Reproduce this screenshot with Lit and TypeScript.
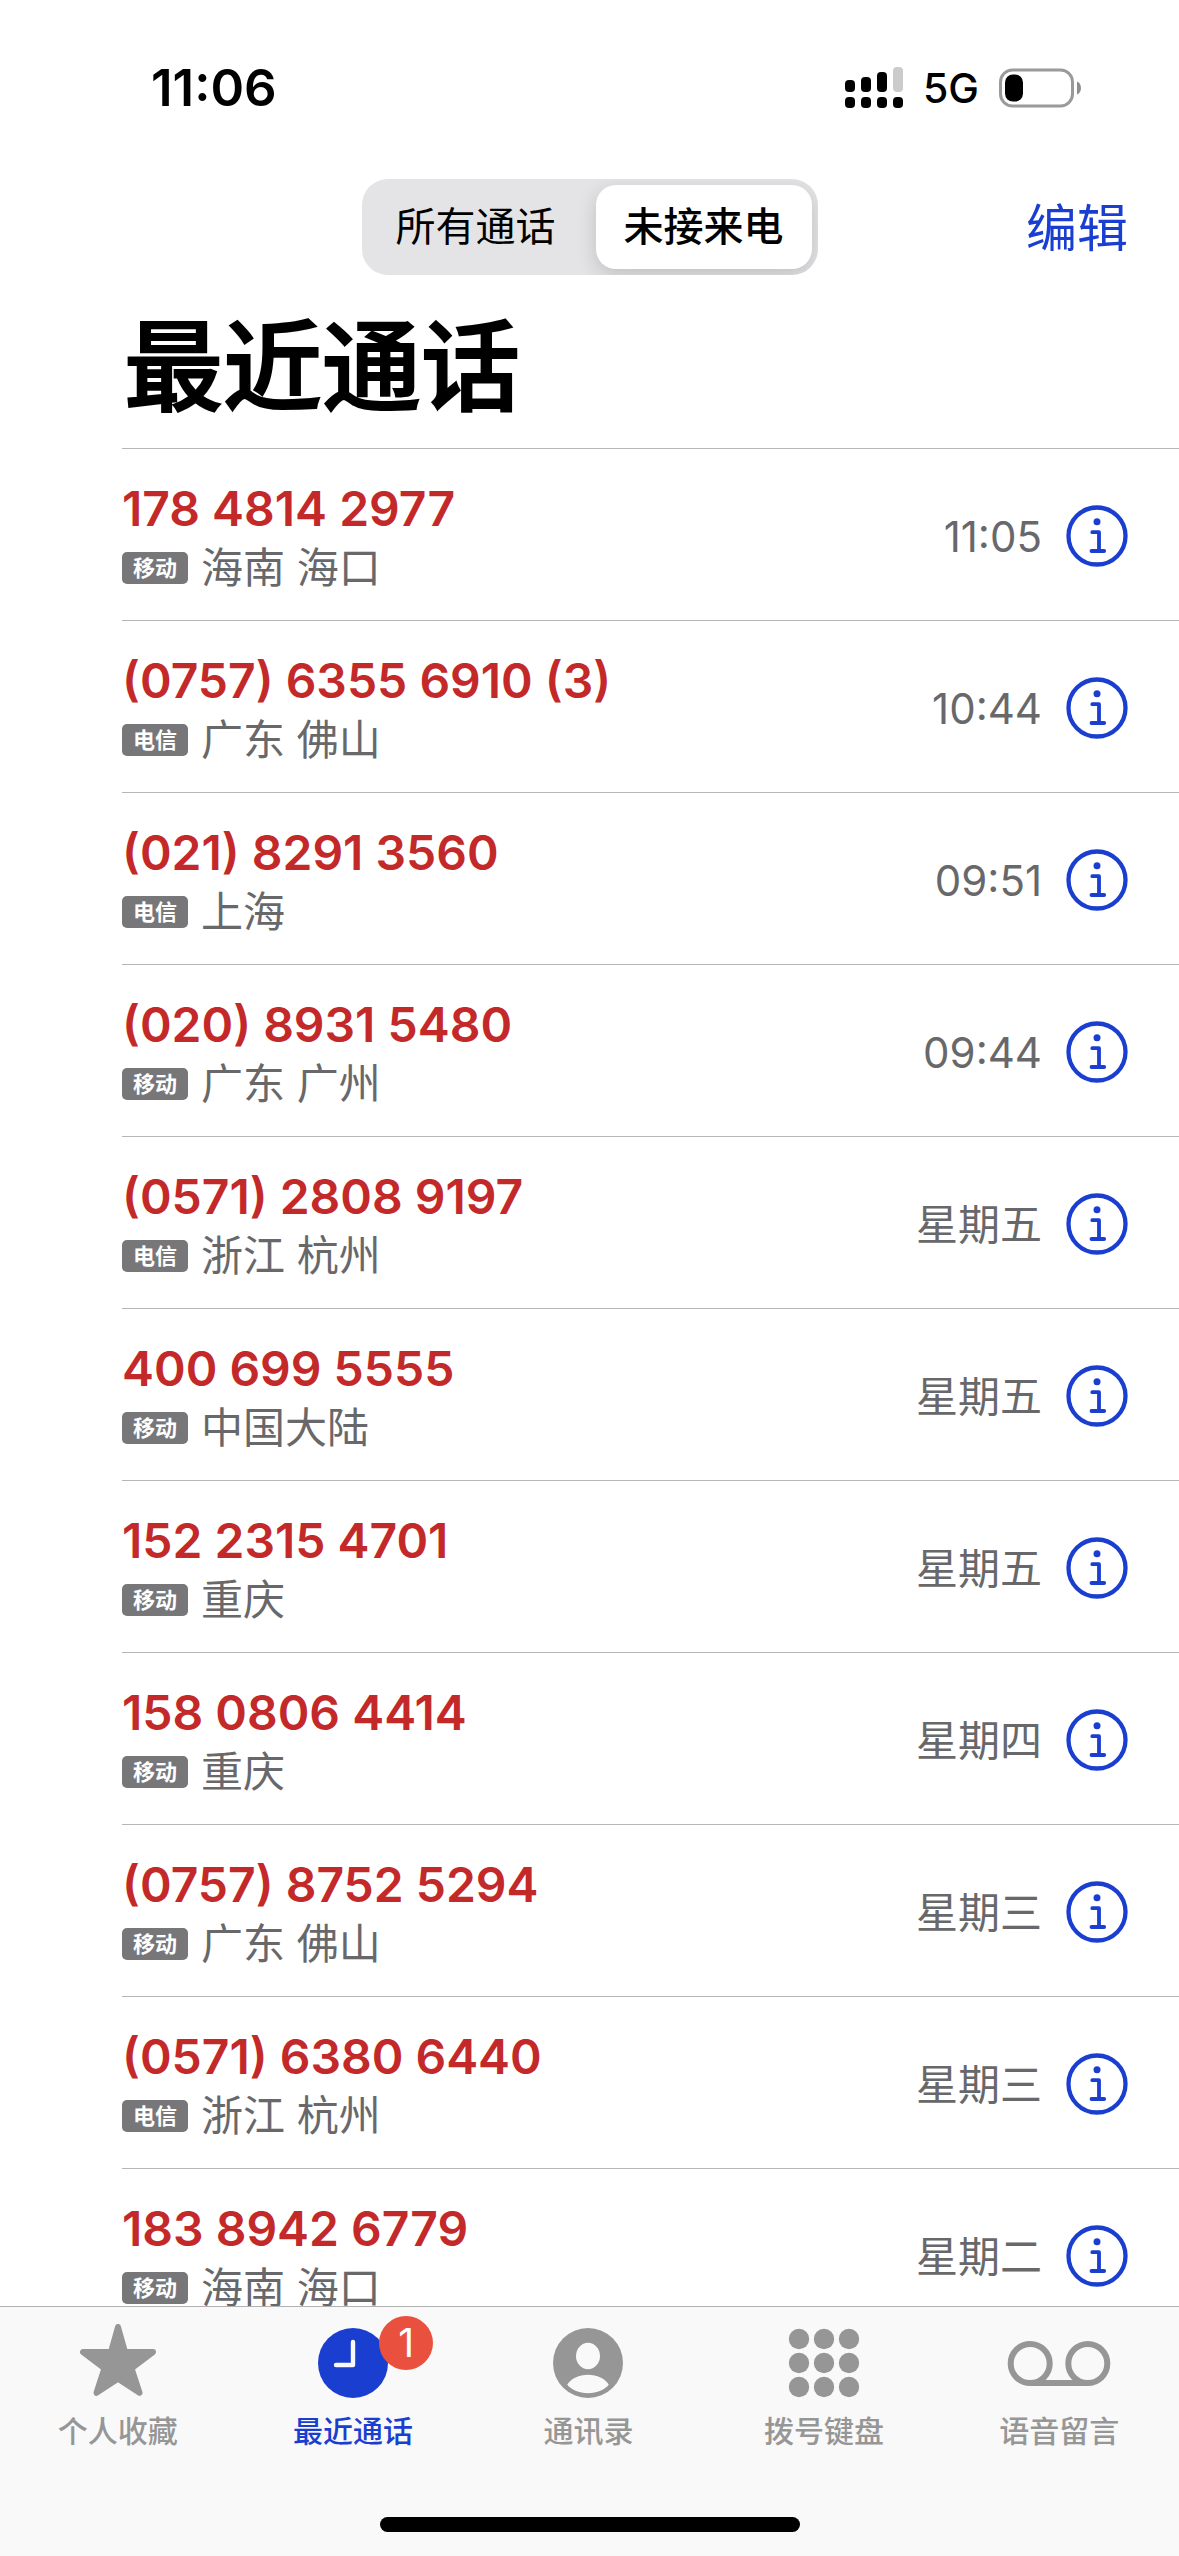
import { LitElement, html, svg, css } from "lit";
import { customElement, state } from "lit/decorators.js";
import { classMap } from "lit/directives/class-map.js";

interface Call {
  number: string;
  carrier: string;
  region: string;
  when: string;
}

const calls: Call[] = [
  { number: "178 4814 2977", carrier: "移动", region: "海南 海口", when: "11:05" },
  { number: "(0757) 6355 6910 (3)", carrier: "电信", region: "广东 佛山", when: "10:44" },
  { number: "(021) 8291 3560", carrier: "电信", region: "上海", when: "09:51" },
  { number: "(020) 8931 5480", carrier: "移动", region: "广东 广州", when: "09:44" },
  { number: "(0571) 2808 9197", carrier: "电信", region: "浙江 杭州", when: "星期五" },
  { number: "400 699 5555", carrier: "移动", region: "中国大陆", when: "星期五" },
  { number: "152 2315 4701", carrier: "移动", region: "重庆", when: "星期五" },
  { number: "158 0806 4414", carrier: "移动", region: "重庆", when: "星期四" },
  { number: "(0757) 8752 5294", carrier: "移动", region: "广东 佛山", when: "星期三" },
  { number: "(0571) 6380 6440", carrier: "电信", region: "浙江 杭州", when: "星期三" },
  { number: "183 8942 6779", carrier: "移动", region: "海南 海口", when: "星期二" },
];

const starIcon = svg`<path d="M52 7 59 32 87 32 65.5 48.3 73.5 72.8 52 58.7 30.5 72.8 38.5 48.3 17 32 45 32Z"
  fill="currentColor" stroke="currentColor" stroke-width="6" stroke-linejoin="round"/>`;
const clockIcon = svg`<circle cx="52" cy="43" r="35" fill="currentColor"/>
  <path d="M52 22V45H35" fill="none" stroke="#f9f9f9" stroke-width="4.4" stroke-linecap="round" stroke-linejoin="round"/>`;
const personIcon = svg`<circle cx="52" cy="43" r="35" fill="currentColor"/>
  <ellipse cx="52" cy="36" rx="12" ry="13.2" fill="#f9f9f9"/>
  <path d="M31.2 64.5C35 58.500 43 54.700 52 54.700S69 58.500 72.800 64.500C69 69.800 61 73.200 52 73.200S35 69.800 31.200 64.500Z" fill="#f9f9f9"/>`;
const keypadIcon = svg`${[19, 43, 67].map((y) =>
  [27, 52, 77].map((x) => svg`<circle cx=${x} cy=${y} r="10.2" fill="currentColor"/>`)
)}`;
const voicemailIcon = svg`<g fill="none" stroke="currentColor" stroke-width="6">
  <circle cx="23.200" cy="43.500" r="19.500"/><circle cx="80.800" cy="43.500" r="19.500"/><path d="M23 63H81"/></g>`;

const tabs = [
  { id: "favorites", label: "个人收藏", icon: starIcon, badge: "" },
  { id: "recents", label: "最近通话", icon: clockIcon, badge: "1" },
  { id: "contacts", label: "通讯录", icon: personIcon, badge: "" },
  { id: "keypad", label: "拨号键盘", icon: keypadIcon, badge: "" },
  { id: "voicemail", label: "语音留言", icon: voicemailIcon, badge: "" },
];

@customElement("call-row")
class CallRow extends LitElement {
  static properties = { call: { attribute: false } };
  declare call: Call;

  static styles = css`
    :host {
      display: flex;
      align-items: center;
      gap: 24px;
      padding: 32px 51px 27px 0;
      border-bottom: 1px solid #b6b6b8;
    }
    .who {
      flex: 1;
      min-width: 0;
    }
    .number {
      font-size: 48px;
      line-height: 56px;
      font-weight: 600;
      color: #c4292a;
      white-space: nowrap;
    }
    .place {
      display: flex;
      align-items: center;
      gap: 13px;
      margin-top: 6px;
      font-size: 42px;
      line-height: 50px;
      color: #68686b;
    }
    .carrier {
      padding: 0 11px;
      border-radius: 5px;
      background: #77777a;
      color: #fff;
      font-size: 22px;
      line-height: 32px;
      font-weight: 700;
    }
    .when {
      font-size: 42px;
      line-height: 50px;
      color: #68686b;
    }
    .info {
      display: flex;
      padding: 0 0 3px;
      border: 0;
      background: none;
      color: #1a3ed0;
      cursor: pointer;
    }
  `;

  render() {
    const { number, carrier, region, when } = this.call;
    return html`
      <div class="who">
        <div class="number">${number}</div>
        <div class="place"><span class="carrier">${carrier}</span><span>${region}</span></div>
      </div>
      <time class="when">${when}</time>
      <button class="info" aria-label="详细信息">
        <svg width="62" height="62" viewBox="-31 -31 62 62" fill="none" stroke="currentColor">
          <circle r="28.500" stroke-width="4.300" />
          <circle cy="-14.300" r="3.500" fill="currentColor" stroke="none" />
          <path d="M-4.700 -3.800H2V15M-5.500 15H7.200" stroke-width="3.800" stroke-linecap="round" stroke-linejoin="round" />
        </svg>
      </button>
    `;
  }
}

@customElement("app-root")
class AppRoot extends LitElement {
  @state() private filter = "missed";
  @state() private tab = "recents";

  static styles = css`
    :host {
      display: flex;
      flex-direction: column;
      height: 100vh;
      overflow: hidden;
      background: #fff;
      color: #000;
      font-family: Inter, "Noto Sans CJK SC", sans-serif;
    }
    button {
      font-family: inherit;
      border: 0;
      padding: 0;
      background: none;
      cursor: pointer;
    }
    .status {
      display: flex;
      align-items: center;
      justify-content: space-between;
      box-sizing: border-box;
      height: 179px;
      padding: 0 97px 3px 151px;
    }
    .clock {
      font-size: 51px;
      line-height: 60px;
      font-weight: 600;
    }
    .signals {
      display: flex;
      align-items: center;
      gap: 20px;
    }
    .network {
      font-size: 41px;
      line-height: 50px;
      font-weight: 500;
    }
    .nav {
      display: grid;
      grid-template-columns: 1fr auto 1fr;
      align-items: center;
      padding: 0 51px;
    }
    .segments {
      grid-column: 2;
      display: grid;
      grid-template-columns: 1fr 1fr;
      gap: 12px;
      padding: 6px;
      border-radius: 26px;
      background: #e4e4e6;
      overflow: hidden;
    }
    .segment {
      padding: 0 28px;
      border-radius: 20px;
      font-size: 40px;
      line-height: 84px;
      color: #000;
    }
    .segment.on {
      background: #fff;
      font-weight: 500;
      box-shadow: 0 6px 20px rgba(0, 0, 0, 0.16);
    }
    .edit {
      justify-self: end;
      padding-top: 3px;
      font-size: 51px;
      line-height: 60px;
      color: #1a3ed0;
    }
    .title {
      margin: 0;
      padding: 32px 0 21px 124px;
      font-size: 99px;
      line-height: 120px;
      font-weight: 500;
      -webkit-text-stroke: 2px #000;
    }
    .list {
      flex: 1;
      min-height: 0;
      margin: 0 0 0 122px;
      padding: 0;
      border-top: 1px solid #b6b6b8;
      list-style: none;
      overflow: hidden;
    }
    .tabbar {
      border-top: 1px solid #b2b2b2;
      background: #f9f9f9;
    }
    .tabs {
      display: grid;
      grid-template-columns: repeat(5, 1fr);
      padding: 13px 2px 0 0;
    }
    .tab {
      display: flex;
      flex-direction: column;
      align-items: center;
      gap: 7px;
      color: #969696;
      font-size: 30px;
      line-height: 40px;
      font-weight: 500;
      text-decoration: none;
    }
    .tab.on {
      color: #1a3ed0;
    }
    .glyph {
      display: flex;
      position: relative;
    }
    .badge {
      position: absolute;
      left: 78px;
      top: -4px;
      min-width: 54px;
      border-radius: 27px;
      background: #e9503e;
      color: #fff;
      font-size: 39px;
      line-height: 54px;
      font-weight: 400;
      text-align: center;
    }
    .home {
      width: 420px;
      height: 15px;
      margin: 66px auto 24px;
      border-radius: 8px;
      background: #000;
    }
  `;

  private segment(id: string, label: string) {
    const on = this.filter === id;
    return html`<button
      class=${classMap({ segment: true, on })}
      aria-pressed=${on ? "true" : "false"}
      @click=${() => (this.filter = id)}
    >${label}</button>`;
  }

  render() {
    return html`
      <header>
        <div class="status">
          <span class="clock">11:06</span>
          <div class="signals">
            <svg width="58" height="42" viewBox="0 0 58 42" aria-hidden="true">
              <rect y="13" width="10" height="12" rx="4" />
              <rect x="16" y="10" width="10" height="15" rx="4" />
              <rect x="32" y="5" width="10" height="20" rx="4" />
              <rect x="48" width="10" height="25" rx="4" fill="#cbcbcb" />
              <rect y="30" width="10" height="11" rx="4" />
              <rect x="16" y="30" width="10" height="11" rx="4" />
              <rect x="32" y="30" width="10" height="11" rx="4" />
              <rect x="48" y="30" width="10" height="11" rx="4" />
            </svg>
            <span class="network">5G</span>
            <svg width="83" height="40" viewBox="0 0 83 40" aria-hidden="true">
              <rect x="1.500" y="2" width="72" height="36" rx="12" fill="none" stroke="#9a9a9a" stroke-width="3" />
              <rect x="6" y="6.500" width="18" height="27" rx="8" />
              <path d="M78 13.500C83.300 15.500 83.300 24.500 78 26.500Z" fill="#8e8e8e" />
            </svg>
          </div>
        </div>
        <div class="nav">
          <div class="segments" role="group" aria-label="通话筛选">
            ${this.segment("all", "所有通话")}${this.segment("missed", "未接来电")}
          </div>
          <button class="edit">编辑</button>
        </div>
        <h1 class="title">最近通话</h1>
      </header>
      <ul class="list">
        ${calls.map((call) => html`<li><call-row .call=${call}></call-row></li>`)}
      </ul>
      <footer class="tabbar">
        <nav class="tabs">
          ${tabs.map(
            (t) => html`<a
              href="#${t.id}"
              class=${classMap({ tab: true, on: this.tab === t.id })}
              @click=${() => (this.tab = t.id)}
            >
              <span class="glyph">
                <svg width="104" height="84" viewBox="0 0 104 84" aria-hidden="true">${t.icon}</svg>
                ${t.badge ? html`<span class="badge">${t.badge}</span>` : null}
              </span>
              <span>${t.label}</span>
            </a>`
          )}
        </nav>
        <div class="home"></div>
      </footer>
    `;
  }
}
